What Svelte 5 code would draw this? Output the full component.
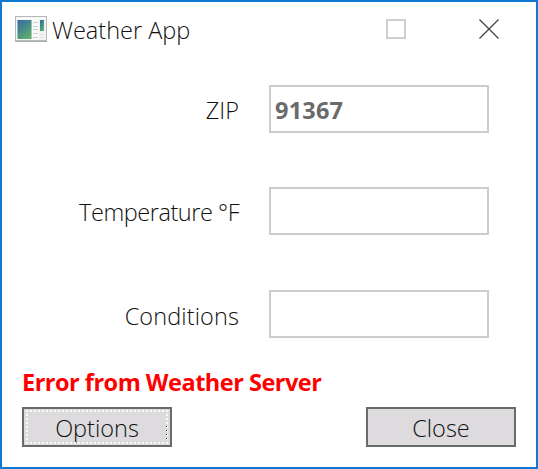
<script>
  let zip = $state('91367');
  let temperature = $state('');
  let conditions = $state('');
</script>

<main class="window">
  <header>
    <svg class="app-icon" width="32" height="26" viewBox="0 0 32 26">
      <defs>
        <linearGradient id="screen" x1="0" y1="0" x2="0.6" y2="1">
          <stop offset="0" stop-color="#3a68a0" />
          <stop offset="0.5" stop-color="#448a8c" />
          <stop offset="1" stop-color="#5cac70" />
        </linearGradient>
      </defs>
      <rect x="0.5" y="0.5" width="31" height="25" fill="#f2f3f3" stroke="#b3b9b7" />
      <path d="M1 25H31" stroke="#a3aaab" stroke-width="1.5" />
      <path d="M2 2.5H30" stroke="#ffffff" />
      <rect x="2.5" y="4" width="14" height="19" fill="url(#screen)" />
      <rect x="17" y="3" width="7" height="21" fill="#fafafa" />
      <path d="M18 6.5H23M18 10.5H23M18 13.5H23M18 17.5H23M18 21.5H23" stroke="#cdd0d2" />
      <rect x="25" y="4" width="4" height="11" fill="url(#screen)" />
      <path d="M25 18.5H29M25 21.5H29" stroke="#dfe1e1" />
    </svg>
    <h1>Weather App</h1>
    <span class="maximize"></span>
    <svg class="close" width="20" height="20" viewBox="0 0 20 20">
      <path d="M0.5 0.5L19.5 19.5M19.5 0.5L0.5 19.5" stroke="#444444" stroke-width="1.3" />
    </svg>
  </header>

  <section class="fields">
    <label><span class="zip">ZIP</span><input bind:value={zip} /></label>
    <label><span class="temp">Temperature °F</span><input bind:value={temperature} /></label>
    <label><span class="cond">Conditions</span><input bind:value={conditions} /></label>
  </section>

  <p class="error">Error from Weather Server</p>

  <footer>
    <button class="focused"><span class="options">Options</span></button>
    <button><span>Close</span></button>
  </footer>
</main>

<style>
  :global(body) {
    margin: 0;
    background: #ffffff;
  }
  .window,
  .window * {
    box-sizing: border-box;
  }
  .window {
    width: 538px;
    height: 469px;
    border: 2px solid #0f78d2;
    background: #ffffff;
    color: #111111;
    font-family: "Open Sans", "Noto Sans", sans-serif;
    font-size: 23.5px;
    font-weight: 300;
    line-height: 32px;
    overflow: hidden;
  }
  header {
    display: flex;
    height: 54px;
    padding: 14px 0 0 13px;
  }
  .app-icon {
    flex: none;
  }
  h1 {
    width: 334px;
    margin: -2px 0 0 5px;
    font-size: inherit;
    font-weight: inherit;
    white-space: nowrap;
  }
  .maximize {
    width: 20px;
    height: 20px;
    margin-top: 3px;
    border: 2px solid #cfcdcf;
  }
  .close {
    margin: 3px 0 0 73px;
  }
  .fields {
    display: flex;
    flex-direction: column;
    padding-top: 29px;
  }
  label {
    display: flex;
    align-items: center;
    gap: 30px;
    height: 48px;
    margin-bottom: 54px;
  }
  label:nth-child(2) {
    margin-bottom: 55px;
  }
  label:last-child {
    margin-bottom: 0;
  }
  label span {
    width: 237px;
    padding-top: 2px;
    text-align: right;
    white-space: nowrap;
  }
  .temp {
    letter-spacing: -0.45px;
  }
  .cond {
    letter-spacing: 0.1px;
    padding-top: 3px;
  }
  input {
    width: 220px;
    height: 48px;
    padding: 2px 4px 0;
    border: 2px solid #cccecc;
    border-radius: 0;
    outline: none;
    background: #ffffff;
    color: #6b6b6b;
    font: 700 23.5px "Open Sans", "Noto Sans", sans-serif;
    letter-spacing: 0.2px;
  }
  .error {
    margin: 28px 0 0 20px;
    color: #ff0000;
    font-weight: 700;
    letter-spacing: -0.5px;
    white-space: nowrap;
  }
  footer {
    display: flex;
    justify-content: space-between;
    padding: 9px 20px 0;
  }
  button {
    position: relative;
    width: 150px;
    height: 40px;
    padding: 2px 0 0;
    border: 2px solid #686c68;
    border-radius: 0;
    background: #dddbdd;
    color: #111111;
    font: inherit;
    line-height: 32px;
  }
  .focused::after {
    position: absolute;
    inset: 1px 2px;
    border: 2px dotted #f8f8f8;
    content: "";
  }
  .focused::before {
    position: absolute;
    right: 3px;
    bottom: 3px;
    z-index: 1;
    width: 1px;
    height: 16px;
    background: repeating-linear-gradient(#333333 0 1px, transparent 1px 4px);
    content: "";
  }
</style>
